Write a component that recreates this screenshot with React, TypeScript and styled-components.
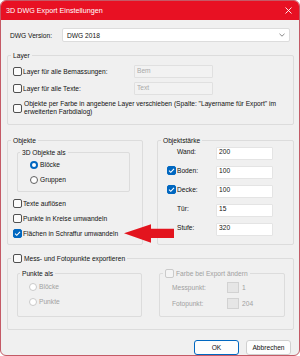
import React from 'react';
import styled, {createGlobalStyle} from 'styled-components';

const GlobalStyle = createGlobalStyle`
  html, body {
    margin: 0;
    padding: 0;
    background: #ffffff;
  }

  body {
    font-family: "Liberation Sans", Arial, sans-serif;
    font-size: 6.65px;
    color: #111111;
  }
`;

const ACCENT = '#0067c0';
const MUTED = '#a0a0a0';
const FACE = '#f0f0f0';

const Window = styled.div`
  position: relative;
  width: 300px;
  height: 356px;
  box-sizing: border-box;
  border: 1px solid #c45a66;
  border-radius: 6px;
  overflow: hidden;
  background: ${FACE};
  display: flex;
  flex-direction: column;
`;

const TitleBar = styled.div`
  flex: none;
  height: 19px;
  padding: 0 7px 0 5px;
  background: #e81123;
  color: #ffffff;
  font-size: 7.2px;
  display: flex;
  align-items: center;
  justify-content: space-between;
`;

const Body = styled.div`
  flex: 1;
  display: flex;
  flex-direction: column;
  padding: 8px 5px 0 6px;
`;

const VersionRow = styled.div`
  display: flex;
  align-items: center;
  height: 14px;
`;

const VersionLabel = styled.span`
  width: 55px;
  padding-left: 3px;
  box-sizing: border-box;
`;

const Select = styled.div`
  width: 228px;
  height: 14px;
  box-sizing: border-box;
  padding: 0 4px;
  background: #ffffff;
  border: 1px solid #dcdcdc;
  border-radius: 2px;
  display: flex;
  align-items: center;
  justify-content: space-between;
`;

/* group box: the title sits on the top border line */
const GroupBox = styled.section<{$top?: number; $left?: number; $width?: number; $pad: string}>`
  box-sizing: border-box;
  margin: ${({$top}) => $top ?? 0}px 0 0 ${({$left}) => $left ?? 0}px;
  padding: ${({$pad}) => $pad};
  border: 1px solid #dcdcdc;
  border-radius: 2px;
  display: flex;
  flex-direction: column;
  ${({$width}) => ($width ? `width: ${$width}px; flex: none;` : 'flex: 1;')}
`;

const GroupTitle = styled.div<{$muted?: boolean; $indent?: number}>`
  align-self: flex-start;
  display: flex;
  align-items: center;
  gap: 2px;
  height: 9px;
  margin: -5px 0 0 ${({$indent}) => $indent ?? 3}px;
  padding: 0 2px;
  line-height: 9px;
  background: ${FACE};
  color: ${({$muted}) => ($muted ? MUTED : '#111111')};
`;

const Stack = styled.div<{$pad: string; $gap: number}>`
  display: flex;
  flex-direction: column;
  padding: ${({$pad}) => $pad};
  gap: ${({$gap}) => $gap}px;
`;

const Row = styled.div<{$h: number; $muted?: boolean}>`
  display: flex;
  align-items: center;
  gap: 1px;
  height: ${({$h}) => $h}px;
  color: ${({$muted}) => ($muted ? MUTED : 'inherit')};
`;

const LayerLabel = styled.span`
  width: 110px;
`;

const WrapText = styled.span`
  line-height: 7.6px;
  padding-left: 1px;
`;

const Field = styled.input<{$disabled?: boolean}>`
  box-sizing: border-box;
  width: ${({$disabled}) => ($disabled ? 79 : 57)}px;
  height: 13px;
  margin: 0;
  padding: 0 2px 3px;
  font: inherit;
  line-height: 9px;
  color: #111111;
  background: ${({$disabled}) => ($disabled ? '#f2f2f2' : '#ffffff')};
  border: 1px solid ${({$disabled}) => ($disabled ? '#e0e0e0' : '#e4e4e4')};
  border-radius: 1px;
  outline: none;

  &::placeholder {
    color: #a8a8a8;
  }
`;

const Box = styled.span<{$checked?: boolean; $disabled?: boolean}>`
  flex: none;
  box-sizing: border-box;
  width: 9px;
  height: 9px;
  border-radius: 2px;
  border: 1px solid
    ${({$checked, $disabled}) => ($checked ? ACCENT : $disabled ? '#cacaca' : '#505050')};
  background: ${({$checked, $disabled}) => ($checked ? ACCENT : $disabled ? '#f4f4f4' : '#fbfbfb')};
  display: inline-flex;
  align-items: center;
  justify-content: center;
`;

const Dot = styled.span<{$checked?: boolean; $disabled?: boolean}>`
  flex: none;
  box-sizing: border-box;
  width: 8px;
  height: 8px;
  margin-right: 1px;
  border-radius: 50%;
  background: #ffffff;
  border: ${({$checked, $disabled}) =>
    $checked ? `2.5px solid ${ACCENT}` : `1px solid ${$disabled ? '#cacaca' : '#606060'}`};
`;

const ObjRow = styled.div`
  display: flex;
  gap: 14px;
  margin-top: 15px;
`;

const SizeGrid = styled.div`
  display: grid;
  grid-template-columns: 9px 40px 57px;
  grid-auto-rows: 13px;
  row-gap: 6px;
  align-items: start;
  padding: 2px 0 0 9px;
`;

const SizeLabel = styled.span`
  padding-left: 1px;
  line-height: 10px;
`;

const GridBox = styled(Box)`
  margin-top: 0.5px;
`;

const MessInner = styled.div`
  display: flex;
  gap: 17px;
  padding: 10px 0 0 9px;
`;

const ColorRow = styled.div`
  display: flex;
  align-items: center;
  height: 11px;
  color: ${MUTED};
`;

const ColorLabel = styled.span`
  width: 55px;
`;

const Swatch = styled.span`
  width: 12px;
  height: 11px;
  box-sizing: border-box;
  margin-right: 3px;
  background: #e6e6e6;
  border: 1px solid #d2d2d2;
`;

const Buttons = styled.div`
  display: flex;
  justify-content: flex-end;
  gap: 7px;
  margin: 10px 3px 0 0;
`;

const Button = styled.button<{$primary?: boolean}>`
  width: 45px;
  height: 15px;
  box-sizing: border-box;
  margin: 0;
  padding: 0;
  font: inherit;
  color: #111111;
  background: #fdfdfd;
  border: ${({$primary}) => ($primary ? `1.5px solid ${ACCENT}` : '1px solid #d0d0d0')};
  border-radius: 3px;
`;

const Arrow = styled.svg`
  position: absolute;
  left: 122px;
  top: 221px;
`;

const Check = () => (
  <svg width="7" height="7" viewBox="0 0 7 7">
    <polyline points="1,3.6 2.8,5.3 6,1.8" fill="none" stroke="#fff" strokeWidth="1.1" />
  </svg>
);

const CheckBox: React.FC<{checked?: boolean; disabled?: boolean}> = ({checked, disabled}) => (
  <Box $checked={checked} $disabled={disabled}>{checked && <Check />}</Box>
);

const sizes = [
  {label: 'Wand:', value: '200', box: false},
  {label: 'Boden:', value: '100', box: true},
  {label: 'Decke:', value: '100', box: true},
  {label: 'Tür:', value: '15', box: false},
  {label: 'Stufe:', value: '320', box: false},
];

export default function App() {
  return (
    <>
      <GlobalStyle />
      <Window>
        <TitleBar>
          <span>3D DWG Export Einstellungen</span>
          <svg width="7" height="7" viewBox="0 0 7 7">
            <path d="M0.5 0.5 L6.5 6.5 M6.5 0.5 L0.5 6.5" stroke="#fff" strokeWidth="0.9" />
          </svg>
        </TitleBar>

        <Body>
          <VersionRow>
            <VersionLabel>DWG Version:</VersionLabel>
            <Select>
              <span>DWG 2018</span>
              <svg width="6" height="4" viewBox="0 0 6 4">
                <polyline points="0.5,0.8 3,3.2 5.5,0.8" fill="none" stroke="#6a6a6a" strokeWidth="0.8" />
              </svg>
            </Select>
          </VersionRow>

          <GroupBox $top={13} $pad="0 0 5px 5px">
            <GroupTitle $indent={-2}>Layer</GroupTitle>
            <Stack $pad="5px 0 0" $gap={4}>
              <Row $h={13}>
                <CheckBox />
                <LayerLabel>Layer für alle Bemassungen:</LayerLabel>
                <Field $disabled readOnly placeholder="Bem" />
              </Row>
              <Row $h={13}>
                <CheckBox />
                <LayerLabel>Layer für alle Texte:</LayerLabel>
                <Field $disabled readOnly placeholder="Text" />
              </Row>
              <Row $h={18}>
                <CheckBox />
                <WrapText>
                  Objekte per Farbe in angebene Layer verschieben (Spalte: "Layername für Export" im
                  <br />
                  erweiterten Farbdialog)
                </WrapText>
              </Row>
            </Stack>
          </GroupBox>

          <ObjRow>
            <GroupBox $width={136} $pad="0 0 5px 5px">
              <GroupTitle $indent={-2}>Objekte</GroupTitle>
              <GroupBox $top={7} $left={4} $width={113} $pad="0 0 6px 12px">
                <GroupTitle $indent={-10}>3D Objekte als</GroupTitle>
                <Stack $pad="3px 0 0" $gap={5}>
                  <Row $h={10}>
                    <Dot $checked />
                    Blöcke
                  </Row>
                  <Row $h={10}>
                    <Dot />
                    Gruppen
                  </Row>
                </Stack>
              </GroupBox>
              <Stack $pad="6px 0 0" $gap={4}>
                <Row $h={11}>
                  <CheckBox />
                  Texte auflösen
                </Row>
                <Row $h={11}>
                  <CheckBox />
                  Punkte in Kreise umwandeln
                </Row>
                <Row $h={11}>
                  <CheckBox checked />
                  Flächen in Schraffur umwandeln
                </Row>
              </Stack>
            </GroupBox>

            <GroupBox $pad="0 0 7px 0">
              <GroupTitle>Objektstärke</GroupTitle>
              <SizeGrid>
                {sizes.map((s) => (
                  <React.Fragment key={s.label}>
                    {s.box ? (
                      <GridBox $checked>
                        <Check />
                      </GridBox>
                    ) : (
                      <span />
                    )}
                    <SizeLabel>{s.label}</SizeLabel>
                    <Field readOnly value={s.value} />
                  </React.Fragment>
                ))}
              </SizeGrid>
            </GroupBox>
          </ObjRow>

          <GroupBox $top={13} $pad="0 0 8px 0">
            <GroupTitle>
              <CheckBox />
              Mess- und Fotopunkte exportieren
            </GroupTitle>
            <MessInner>
              <GroupBox $width={125} $pad="0 0 8px 11px">
                <GroupTitle $indent={-9}>Punkte als</GroupTitle>
                <Stack $pad="4px 0 0" $gap={5}>
                  <Row $h={10} $muted>
                    <Dot $disabled />
                    Blöcke
                  </Row>
                  <Row $h={10} $muted>
                    <Dot $disabled />
                    Punkte
                  </Row>
                </Stack>
              </GroupBox>
              <GroupBox $width={126} $pad="0 0 7px 12px">
                <GroupTitle $muted $indent={-9}>
                  <CheckBox disabled />
                  Farbe bei Export ändern
                </GroupTitle>
                <Stack $pad="4px 0 0" $gap={5}>
                  <ColorRow>
                    <ColorLabel>Messpunkt:</ColorLabel>
                    <Swatch />1
                  </ColorRow>
                  <ColorRow>
                    <ColorLabel>Fotopunkt:</ColorLabel>
                    <Swatch />204
                  </ColorRow>
                </Stack>
              </GroupBox>
            </MessInner>
          </GroupBox>

          <Buttons>
            <Button $primary>OK</Button>
            <Button>Abbrechen</Button>
          </Buttons>
        </Body>

        <Arrow width="52" height="22" viewBox="0 0 52 22">
          <polygon
            points="1,11.3 28,2.3 28,6.7 51,6.7 51,16 28,16 28,20.7"
            fill="#e3141e"
          />
        </Arrow>
      </Window>
    </>
  );
}
